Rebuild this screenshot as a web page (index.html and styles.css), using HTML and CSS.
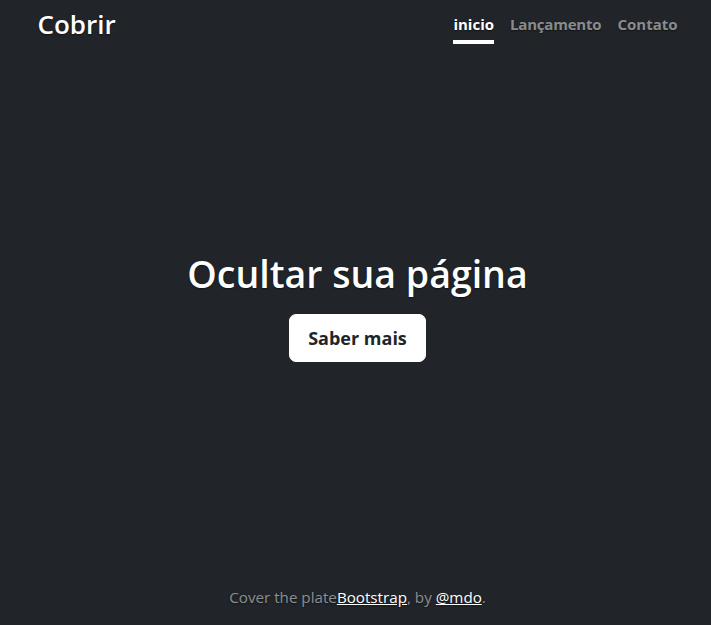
FILE: index.html
```html
<!DOCTYPE html>
<html lang="pt">
<head>
<meta charset="utf-8">
<title>Cobrir</title>
<link rel="stylesheet" href="styles.css">
</head>
<body>
<div class="cover">
  <header class="masthead">
    <h3 class="brand">Cobrir</h3>
    <nav class="nav">
      <a class="nav-link active" href="#">inicio</a>
      <a class="nav-link lanc" href="#">Lançamento</a>
      <a class="nav-link" href="#">Contato</a>
    </nav>
  </header>
  <main class="hero">
    <h1 class="hero-title">Ocultar sua página</h1>
    <p class="lead"><a href="#" class="btn">Saber mais</a></p>
  </main>
  <footer class="foot">
    <p class="foot-text">Cover the plate<a href="#" class="foot-link">Bootstrap</a>, by <a href="#" class="foot-link">@mdo</a>.</p>
  </footer>
</div>
</body>
</html>
```
FILE: styles.css
```css
html, body { height: 100%; }
body {
  margin: 0;
  display: flex;
  background: #212529;
  color: #fff;
  font-family: "Open Sans", "Noto Sans", sans-serif;
  font-size: 16px;
  line-height: 1.5;
  text-shadow: 0 0.05rem 0.1rem rgba(0,0,0,.5);
}
.cover {
  box-sizing: border-box;
  width: 100%;
  max-width: 42em;
  height: 100%;
  margin: 0 auto;
  padding: 16px;
  display: flex;
  flex-direction: column;
}
.masthead {
  display: flex;
  justify-content: space-between;
  align-items: flex-start;
  margin-bottom: auto;
}
.brand {
  margin: -7px 0 0 2px;
  font-size: 26px;
  font-weight: 600;
  line-height: 1.2;
}
.nav { display: flex; margin: -7px -2px 0 0; }
.nav-link {
  display: block;
  padding: 4px 0;
  margin-left: 16px;
  font-size: 15px;
  font-weight: 700;
  color: rgba(255,255,255,.5);
  text-decoration: none;
  border-bottom: 4px solid transparent;
}
.nav-link.lanc { letter-spacing: -0.2px; }
.nav-link.active { color: #fff; border-bottom-color: #fff; }
.hero { text-align: center; padding-left: 4px; }
.hero-title {
  margin: 0 0 18px;
  font-size: 37.5px;
  font-weight: 600;
  line-height: 1.2;
}
.lead { margin: 0 0 16px; font-size: 18px; }
.btn {
  display: inline-block;
  padding: 8px 18px;
  font-size: 18px;
  line-height: 30px;
  font-weight: 700;
  color: #212529;
  background: #fff;
  border: 1px solid #fff;
  border-radius: 7px;
  text-decoration: none;
  text-shadow: none;
}
.foot { margin-top: auto; text-align: center; color: rgba(255,255,255,.5); padding-left: 4px; }
.foot-text { margin: 0; font-size: 15.2px; }
.foot-link { color: #fff; }
```
